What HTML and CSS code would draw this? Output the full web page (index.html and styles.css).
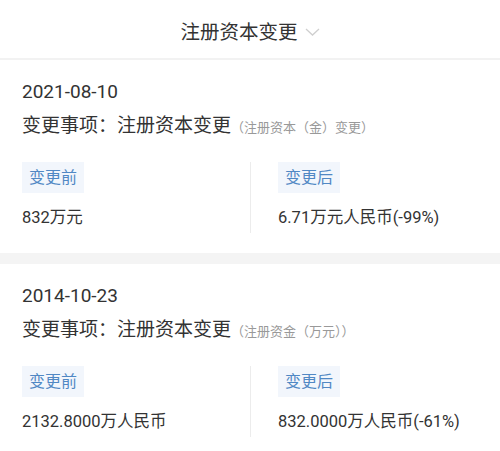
FILE: index.html
```html
<!DOCTYPE html>
<html lang="zh-CN">
<head>
<meta charset="utf-8">
<link rel="stylesheet" href="styles.css">
</head>
<body>
<header class="header">
  <span class="title">注册资本变更</span>
  <svg class="chev" width="15" height="8" viewBox="0 0 15 8"><path d="M1 1 L7.5 7 L14 1" fill="none" stroke="#cfcfcf" stroke-width="1.3"/></svg>
</header>

<section class="card">
  <div class="date">2021-08-10</div>
  <div class="subject">变更事项：注册资本变更<span class="note">（注册资本（金）变更）</span></div>
  <div class="cols">
    <div class="col">
      <span class="tag">变更前</span>
      <div class="value">832万元</div>
    </div>
    <div class="col right">
      <span class="tag">变更后</span>
      <div class="value">6.71万元人民币(-99%)</div>
    </div>
  </div>
</section>
<div class="sep"></div>
<section class="card">
  <div class="date">2014-10-23</div>
  <div class="subject">变更事项：注册资本变更<span class="note">（注册资金（万元））</span></div>
  <div class="cols">
    <div class="col">
      <span class="tag">变更前</span>
      <div class="value">2132.8000万人民币</div>
    </div>
    <div class="col right">
      <span class="tag">变更后</span>
      <div class="value">832.0000万人民币(-61%)</div>
    </div>
  </div>
</section>
</body>
</html>
```

FILE: styles.css
```css
html, body {
  margin: 0;
  padding: 0;
  background: #ffffff;
}
body {
  font-family: "Roboto", "Noto Sans CJK SC", sans-serif;
  color: #333333;
  width: 500px;
  overflow: hidden;
}
.header {
  box-sizing: border-box;
  height: 60px;
  padding-top: 7px;
  border-bottom: 2px solid #f2f2f2;
  display: flex;
  align-items: center;
  justify-content: center;
  gap: 7px;
}
.title {
  font-size: 19.5px;
  color: #333;
  line-height: 26px;
}
.chev {
  display: block;
  margin-top: -2px;
}
.card {
  padding: 19px 22px 20px;
}
.date {
  font-size: 19px;
  line-height: 26px;
}
.subject {
  margin-top: 8px;
  font-size: 19px;
  line-height: 26px;
  white-space: nowrap;
}
.note {
  font-size: 13px;
  color: #999999;
}
.cols {
  margin-top: 21px;
  display: grid;
  grid-template-columns: 1fr 1fr;
}
.col {
  display: flex;
  flex-direction: column;
  align-items: flex-start;
  padding-bottom: 3px;
}
.col.right {
  border-left: 1px solid #ececec;
  padding-left: 27px;
}
.tag {
  display: inline-block;
  background: #f2f6fc;
  color: #5088c4;
  font-size: 16px;
  line-height: 31px;
  padding: 0 7px;
}
.value {
  margin-top: 13px;
  font-size: 16.5px;
  line-height: 24px;
  white-space: nowrap;
}
.sep {
  height: 11px;
  background: #f4f4f4;
}
```
